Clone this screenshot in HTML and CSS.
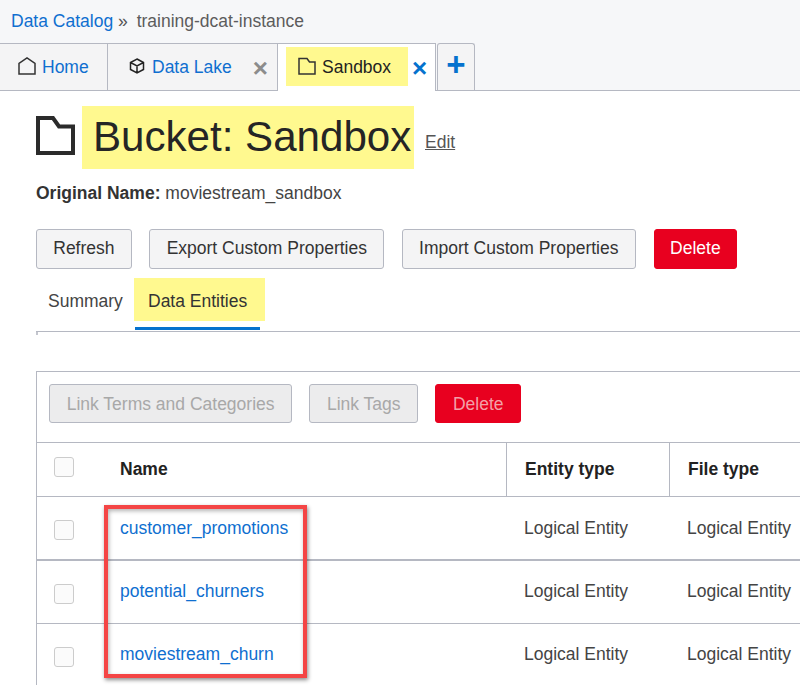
FILE: index.html
```html
<!DOCTYPE html>
<html lang="en">
<head>
  <meta charset="UTF-8">
  <title>Bucket: Sandbox</title>
  <link rel="stylesheet" href="styles.css">
</head>
<body>

  <!-- Breadcrumb -->
  <div class="crumbs">
    <a class="link" href="#">Data Catalog</a>
    <span class="crumb-sep">»</span>
    <span class="crumb-current">training-dcat-instance</span>
  </div>

  <!-- Tabs -->
  <div class="tabs">
    <div class="tab tab-home">
      <svg class="tab-icon" viewBox="0 0 18 18"><path d="M1 17V6.500L9 1l8 5.500V17z" fill="none" stroke="#333" stroke-width="1.5"/></svg>
      <a class="link" href="#">Home</a>
    </div>
    <div class="tab tab-lake">
      <svg class="tab-icon-cube" viewBox="0 0 16 16"><path d="M8 1l6.500 3.500v7L8 15l-6.500-3.500v-7zM1.500 4.500L8 8l6.500-3.500M8 8v7" fill="none" stroke="#222" stroke-width="1.5"/></svg>
      <a class="link" href="#">Data Lake</a>
      <span class="tab-close">×</span>
    </div>
    <div class="tab tab-active">
      <span class="mark tab-mark">
        <svg class="tab-icon" viewBox="0 0 18 18"><path d="M1 1.500h8l2.500 3.500H17v12H1z" fill="none" stroke="#333" stroke-width="1.5"/></svg>
        Sandbox
      </span>
      <span class="tab-close tab-close-on">×</span>
    </div>
    <div class="tab-add">+</div>
  </div>

  <div class="page">
    <!-- Title -->
    <div class="title-row">
      <svg class="title-icon" viewBox="0 0 39 39"><path d="M2 2h15l6 8.500h14V37H2z" fill="none" stroke="#2b2b2b" stroke-width="4"/></svg>
      <h1 class="mark title">Bucket: Sandbox</h1>
      <a class="edit" href="#">Edit</a>
    </div>
    <p class="orig"><b>Original Name:</b> moviestream_sandbox</p>

    <div class="actions">
      <button class="btn">Refresh</button>
      <button class="btn">Export Custom Properties</button>
      <button class="btn">Import Custom Properties</button>
      <button class="btn btn-danger">Delete</button>
    </div>

    <!-- Sub tabs -->
    <div class="subtabs">
      <div class="subtab">Summary</div>
      <div class="subtab subtab-on"><span class="mark subtab-mark">Data Entities</span></div>
    </div>
    <div class="subtabs-tick"></div>

    <!-- Table -->
    <div class="panel">
      <div class="toolbar">
        <button class="btn btn-off">Link Terms and Categories</button>
        <button class="btn btn-off">Link Tags</button>
        <button class="btn btn-danger btn-danger-off">Delete</button>
      </div>
      <div class="row row-head">
        <div class="cell-check"><span class="check"></span></div>
        <div class="cell-name">Name</div>
        <div class="cell-type">Entity type</div>
        <div class="cell-file">File type</div>
      </div>
      <div class="row row-thick">
        <div class="cell-check"><span class="check"></span></div>
        <div class="cell-name"><a class="link" href="#">customer_promotions</a></div>
        <div class="cell-type">Logical Entity</div>
        <div class="cell-file">Logical Entity</div>
      </div>
      <div class="row">
        <div class="cell-check"><span class="check"></span></div>
        <div class="cell-name"><a class="link" href="#">potential_churners</a></div>
        <div class="cell-type">Logical Entity</div>
        <div class="cell-file">Logical Entity</div>
      </div>
      <div class="row row-last">
        <div class="cell-check"><span class="check"></span></div>
        <div class="cell-name"><a class="link" href="#">moviestream_churn</a></div>
        <div class="cell-type">Logical Entity</div>
        <div class="cell-file">Logical Entity</div>
      </div>
    </div>
  </div>

  <!-- Red callout drawn over the table -->
  <div class="callout"></div>

</body>
</html>
```

FILE: styles.css
```css
html, body {
  height: 685px;
  overflow: hidden;
}
body {
  position: relative;
  margin: 0;
  background: #fff;
  color: #444;
  font-family: "Liberation Sans", Arial, sans-serif;
  font-size: 17.5px;
}
.link {
  color: #0f6fd0;
  text-decoration: none;
}
.mark {
  background: #fff98f;
}

/* breadcrumb */
.crumbs {
  box-sizing: border-box;
  height: 43px;
  padding: 11px 0 0 11px;
  background: #f6f7f9;
  line-height: 20px;
}
.crumb-sep {
  margin: 0 4px 0 0;
  color: #555;
}
.crumb-current {
  color: #5c5c5c;
}

/* top tabs */
.tabs {
  box-sizing: border-box;
  display: flex;
  height: 48px;
  background: #f6f7f9;
  border-bottom: 1px solid #b5b8c2;
}
.tab {
  box-sizing: border-box;
  display: flex;
  align-items: center;
  height: 47px;
  background: #f4f4f5;
  border-top: 1px solid #b5b8c2;
  border-right: 1px solid #b5b8c2;
}
.tab-home {
  width: 108px;
  padding-left: 18px;
}
.tab-lake {
  width: 170px;
  padding-left: 21px;
}
.tab-lake .link {
  margin-left: 7px;
}
.tab-icon {
  width: 18px;
  height: 18px;
  margin: -2px 6px 0 0;
}
.tab-icon-cube {
  width: 16px;
  height: 16px;
  margin-top: -2px;
}
.tab-close {
  margin: 2px 0 0 21px;
  color: #8c8c8c;
  font-size: 26px;
  font-weight: bold;
  line-height: 20px;
}
.tab-active {
  width: 159px;
  height: 48px;
  padding: 0 0 3px 8px;
  background: #fff;
  border-left: 1px solid #b5b8c2;
  margin-left: -1px;
}
.tab-mark {
  box-sizing: border-box;
  display: flex;
  align-items: center;
  width: 122px;
  height: 39px;
  padding: 3px 0 0 12px;
  color: #222;
}
.tab-mark .tab-icon {
  margin-top: -3px;
}
.tab-close-on {
  margin: 4px 0 0 4px;
  color: #0572ce;
}
.tab-add {
  box-sizing: border-box;
  width: 38px;
  height: 47px;
  margin-left: 1px;
  background: #f4f4f5;
  border: 1px solid #b5b8c2;
  border-bottom: 0;
  border-radius: 3px 3px 0 0;
  color: #0572ce;
  font-size: 33px;
  font-weight: bold;
  line-height: 42px;
  text-align: center;
}

/* page heading */
.page {
  padding: 15px 0 0 36px;
}
.title-row {
  display: flex;
  align-items: flex-start;
}
.title-icon {
  width: 39px;
  height: 39px;
  margin: 10px 7px 0 0;
}
.title {
  box-sizing: border-box;
  width: 332px;
  height: 63px;
  margin: 0;
  padding-left: 11px;
  color: #252525;
  font-size: 42.100px;
  font-weight: normal;
  line-height: 61px;
  white-space: nowrap;
}
.edit {
  margin: 26px 0 0 11px;
  color: #555;
}
.orig {
  margin: 14px 0 0;
  line-height: 20px;
}
.orig b {
  color: #333;
}

/* buttons */
.actions {
  display: flex;
  gap: 17.600px;
  margin-top: 26px;
}
.actions .btn-danger {
  margin-left: 0.6px;
  padding: 0 15.200px 2px;
}
.btn {
  box-sizing: border-box;
  height: 40px;
  padding: 0 16.250px 2px;
  background: #f4f4f5;
  border: 1px solid #b5b8c2;
  border-radius: 3px;
  color: #333;
  font-family: inherit;
  font-size: 17.5px;
}
.btn-danger {
  padding: 0 15.500px 2px;
  background: #e8001f;
  border-color: #e8001f;
  color: #fff;
}
.btn-off {
  background: #ececed;
  color: #a8a8a8;
}
.btn-danger-off {
  color: #f3a0a8;
}

/* sub tabs */
.subtabs {
  display: flex;
  height: 53px;
  margin-top: 9px;
  border-bottom: 1px solid #b5b8c2;
}
.subtab {
  width: 87px;
  padding: 13px 0 0 12px;
  line-height: 20px;
}
.subtab-on {
  box-sizing: border-box;
  width: 125px;
  height: 52px;
  padding: 0;
  border-bottom: 3px solid #0572ce;
}
.subtab-mark {
  box-sizing: border-box;
  display: block;
  width: 131px;
  height: 43px;
  margin-left: -1px;
  padding: 13px 0 0 14px;
  color: #333;
}
.subtabs-tick {
  width: 2px;
  height: 3px;
  background: #c4c6ce;
}

/* table */
.panel {
  margin-top: 36px;
  border-top: 1px solid #b5b8c2;
  border-left: 1px solid #b5b8c2;
}
.toolbar {
  display: flex;
  gap: 17px;
  height: 46px;
  padding: 12px;
  border-bottom: 1px solid #b5b8c2;
}
.toolbar .btn {
  height: 39px;
  padding: 1px 16.700px 0;
}
.row {
  display: flex;
  align-items: center;
  height: 62px;
  border-bottom: 1px solid #b5b8c2;
}
.row-thick {
  border-bottom-width: 2px;
}
.row-last {
  border-bottom: 0;
}
.row-head {
  height: 53px;
  color: #222;
  font-weight: bold;
}
.cell-check {
  box-sizing: border-box;
  width: 83px;
  padding-left: 17px;
}
.check {
  display: block;
  box-sizing: border-box;
  width: 20px;
  height: 20px;
  margin-top: 3px;
  background: #fbfbfb;
  border: 1px solid #ccc;
  border-radius: 3px;
}
.row-head .check {
  margin-top: -6px;
}
.cell-name {
  width: 386px;
}
.cell-type {
  box-sizing: border-box;
  width: 163px;
  padding-left: 18px;
}
.cell-file {
  padding-left: 18px;
}
.row .cell-name,
.row .cell-type,
.row .cell-file {
  margin-top: -2px;
}
.row-thick .cell-name,
.row-thick .cell-type,
.row-thick .cell-file {
  margin-top: 0;
}
.row-head .cell-name,
.row-head .cell-type,
.row-head .cell-file {
  display: flex;
  align-items: center;
  height: 100%;
  margin-top: 0;
}
.row-head .cell-type,
.row-head .cell-file {
  border-left: 1px solid #b5b8c2;
}

/* callout */
.callout {
  position: absolute;
  left: 104px;
  top: 505px;
  width: 203px;
  height: 173px;
  box-sizing: border-box;
  border: 4px solid #f44545;
  box-shadow: 1px 2px 4px rgba(0, 0, 0, 0.45), inset 1px 2px 4px rgba(0, 0, 0, 0.3);
}
```
